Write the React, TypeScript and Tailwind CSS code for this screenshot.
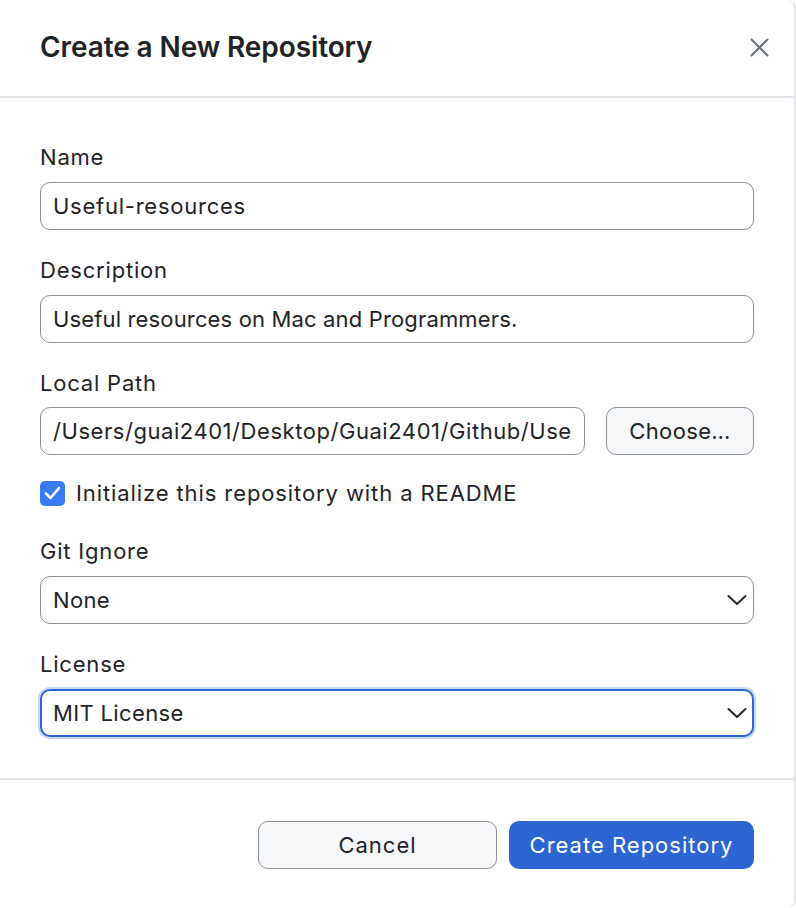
import React, { useState } from "react";

const labelCls = "text-[22px] leading-6 tracking-[0.8px] text-[#1f2328]";
const fieldBase =
  "h-12 w-full rounded-[10px] border-[1.5px] border-[#8b9097] bg-white px-3 text-[22px] text-[#1f2328] outline-none";

const Chevron: React.FC = () => (
  <svg width="20" height="11" viewBox="0 0 20 11" fill="none" className="pointer-events-none absolute right-[7px] top-1/2 -translate-y-1/2">
    <path d="M1.5 1.5 L10 9.5 L18.5 1.5" stroke="#24292f" strokeWidth="2" strokeLinecap="round" strokeLinejoin="round" />
  </svg>
);

const SelectBox: React.FC<{ value: string; focused?: boolean }> = ({ value, focused }) => (
  <div className="relative">
    <div
      className={
        focused
          ? "flex h-12 w-full items-center rounded-[10px] border-2 border-[#2b66d3] bg-white px-[11px] text-[22px] tracking-[0.35px] text-[#1f2328] shadow-[0_0_0_2px_#c9d8f3]"
          : "flex h-12 w-full items-center rounded-[10px] border-[1.5px] border-[#8b9097] bg-white px-3 text-[22px] tracking-[0.35px] text-[#1f2328]"
      }
    >
      {value}
    </div>
    <Chevron />
  </div>
);

export default function App() {
  const [name, setName] = useState("Useful-resources");
  const [desc, setDesc] = useState("Useful resources on Mac and Programmers.");
  const [path, setPath] = useState("/Users/guai2401/Desktop/Guai2401/Github/Useful-resources");
  const [readme, setReadme] = useState(true);

  return (
    <div className="h-[908px] w-[796px] bg-white" style={{ fontFamily: "Inter, 'Noto Sans', sans-serif" }}>
      <div className="flex h-full flex-col rounded-r-lg border-r-2 border-[#e6e6ea]">
        {/* Header */}
        <div className="flex h-[98px] items-center justify-between border-b-2 border-[#e4e4e8] pb-[2px] pl-10 pr-[19px]">
          <h1 className="text-[28px] font-semibold tracking-[-0.1px] text-[#1f2328]">Create a New Repository</h1>
          <button className="flex h-8 w-8 items-center justify-center">
            <svg width="19" height="19" viewBox="0 0 19 19" fill="none">
              <path d="M1.5 1.5 L17.5 17.5 M17.5 1.5 L1.5 17.5" stroke="#6a7078" strokeWidth="2" strokeLinecap="round" />
            </svg>
          </button>
        </div>

        {/* Body */}
        <div className="flex flex-col pb-[41px] pl-10 pr-10 pt-[47px]">
          <div className="flex flex-col gap-[13px]">
            <label className={labelCls}>Name</label>
            <input className={fieldBase + " tracking-[0.75px]"} value={name} onChange={(e) => setName(e.target.value)} />
          </div>

          <div className="mt-7 flex flex-col gap-[13px]">
            <label className={labelCls}>Description</label>
            <input className={fieldBase + " tracking-[0.15px]"} value={desc} onChange={(e) => setDesc(e.target.value)} />
          </div>

          <div className="mt-7 flex flex-col gap-[12px]">
            <label className={labelCls}>Local Path</label>
            <div className="flex gap-[21px]">
              <input className={fieldBase + " flex-1 tracking-[0.55px]"} value={path} onChange={(e) => setPath(e.target.value)} />
              <button className="h-12 w-[148px] shrink-0 rounded-[10px] border-[1.5px] border-[#8b9097] bg-[#f6f7f9] text-[22px] tracking-[0.35px] text-[#1f2328]">
                Choose…
              </button>
            </div>
          </div>

          <label className="mt-[26px] flex h-6 items-center gap-[11px]">
            <span
              onClick={() => setReadme(!readme)}
              className="flex h-[25px] w-[25px] items-center justify-center rounded-[5px] bg-[#3a7af3]"
            >
              {readme && (
                <svg width="17" height="14" viewBox="0 0 17 14" fill="none">
                  <path d="M2 7.5 L6.5 12 L15 2" stroke="white" strokeWidth="2.6" strokeLinecap="round" strokeLinejoin="round" />
                </svg>
              )}
            </span>
            <span className="text-[22px] tracking-[0.9px] text-[#1f2328]">Initialize this repository with a README</span>
          </label>

          <div className="mt-[34px] flex flex-col gap-[13px]">
            <label className={labelCls}>Git Ignore</label>
            <SelectBox value="None" />
          </div>

          <div className="mt-7 flex flex-col gap-[13px]">
            <label className={labelCls}>License</label>
            <SelectBox value="MIT License" focused />
          </div>
        </div>

        {/* Footer */}
        <div className="flex justify-end gap-3 border-t-2 border-[#e4e4e8] pl-10 pr-10 pt-[41px]">
          <button className="h-12 w-[239px] rounded-[10px] border-[1.5px] border-[#8b9097] bg-[#f6f7f9] text-[22px] tracking-[1px] text-[#1f2328]">
            Cancel
          </button>
          <button className="h-12 w-[245px] rounded-[10px] bg-[#2c66d2] text-[22px] tracking-[1px] text-white">Create Repository</button>
        </div>
      </div>
    </div>
  );
}
